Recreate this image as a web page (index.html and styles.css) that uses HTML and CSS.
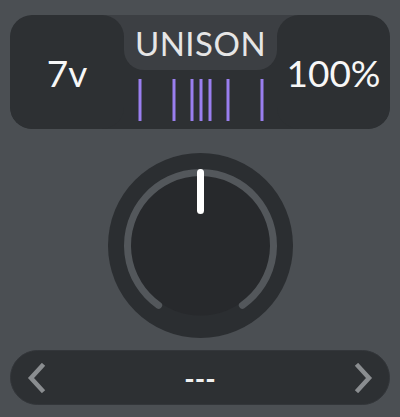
FILE: index.html
```html
<!DOCTYPE html>
<html lang="en">
<head>
  <meta charset="UTF-8">
  <meta name="viewport" content="width=device-width, initial-scale=1.0">
  <title>Unison</title>
  <link rel="stylesheet" href="styles.css">
</head>
<body>

<div class="unison-panel">
  <div class="header">
    <div class="side-box voices">7v</div>
    <div class="title-tab">UNISON</div>
    <div class="spread">
      <svg width="153" height="59" viewBox="0 0 153 59">
        <g stroke="#9a7ff0" stroke-width="3">
          <line x1="16" y1="9" x2="16" y2="51" />
          <line x1="50" y1="9" x2="50" y2="51" />
          <line x1="68" y1="9" x2="68" y2="51" />
          <line x1="77" y1="9" x2="77" y2="51" />
          <line x1="86" y1="9" x2="86" y2="51" />
          <line x1="104" y1="9" x2="104" y2="51" />
          <line x1="138" y1="9" x2="138" y2="51" />
        </g>
      </svg>
    </div>
    <div class="side-box detune">100%</div>
  </div>

  <div class="knob-wrap">
    <svg class="knob" width="185" height="185" viewBox="0 0 185 185">
      <circle cx="92.5" cy="92.5" r="92.5" fill="#2b2e31" />
      <circle cx="92.5" cy="92.5" r="70" fill="#27292c" />
      <path d="M50.63 152.3 A73 73 0 1 1 134.37 152.3" fill="none" stroke="#53575b" stroke-width="7" stroke-linecap="round" />
      <line x1="92.5" y1="19.5" x2="92.5" y2="57.5" stroke="#ffffff" stroke-width="7" stroke-linecap="round" />
    </svg>
  </div>

  <div class="preset-bar">
    <button class="arrow" type="button">
      <svg width="20" height="30" viewBox="0 0 20 30">
        <polyline points="15,3 4,15 15,27" fill="none" stroke="#8a8d90" stroke-width="4.5" stroke-linecap="square" stroke-linejoin="miter" />
      </svg>
    </button>
    <span class="preset-name">---</span>
    <button class="arrow" type="button">
      <svg width="20" height="30" viewBox="0 0 20 30">
        <polyline points="5,3 16,15 5,27" fill="none" stroke="#8a8d90" stroke-width="4.5" stroke-linecap="square" stroke-linejoin="miter" />
      </svg>
    </button>
  </div>
</div>

</body>
</html>
```

FILE: styles.css
```css
body {
  margin: 0;
  background-color: #4b4f53;
  font-family: Lato, "Open Sans", sans-serif;
  color: #ffffff;
}

.unison-panel {
  width: 400px;
  height: 417px;
  padding: 15px 10px 0;
  box-sizing: border-box;
}

.header {
  display: grid;
  grid-template-columns: 114px 153px 113px;
  grid-template-rows: 55px 59px;
  height: 114px;
  border-radius: 22px;
  overflow: hidden;
  background: linear-gradient(#3c3f43 0 30px, #2d3033 30px);
}

.side-box {
  grid-row: 1 / span 2;
  background-color: #2d3033;
  border-radius: 22px;
  display: flex;
  align-items: center;
  justify-content: center;
  font-size: 37px;
  color: #f7f7f7;
}

.detune {
  grid-column: 3;
}

.title-tab {
  grid-column: 2;
  grid-row: 1;
  background-color: #3c3f43;
  border-radius: 0 0 20px 20px;
  display: flex;
  align-items: center;
  justify-content: center;
  font-size: 33px;
  color: #e6e6e6;
  letter-spacing: 0.5px;
}

.spread {
  grid-column: 2;
  grid-row: 2;
  display: flex;
}

.knob-wrap {
  display: flex;
  justify-content: center;
  padding-top: 24px;
  height: 185px;
}

.preset-bar {
  margin-top: 12px;
  height: 55px;
  box-sizing: border-box;
  border: 1px solid #33363a;
  border-radius: 28px;
  background-color: #2d3033;
  display: flex;
  align-items: center;
  justify-content: space-between;
  padding: 0 16px;
}

.arrow {
  background: none;
  border: none;
  padding: 0;
  width: 20px;
  height: 30px;
  display: flex;
}

.preset-name {
  font-size: 28px;
  font-weight: 700;
  color: #f0f0f0;
}
```
